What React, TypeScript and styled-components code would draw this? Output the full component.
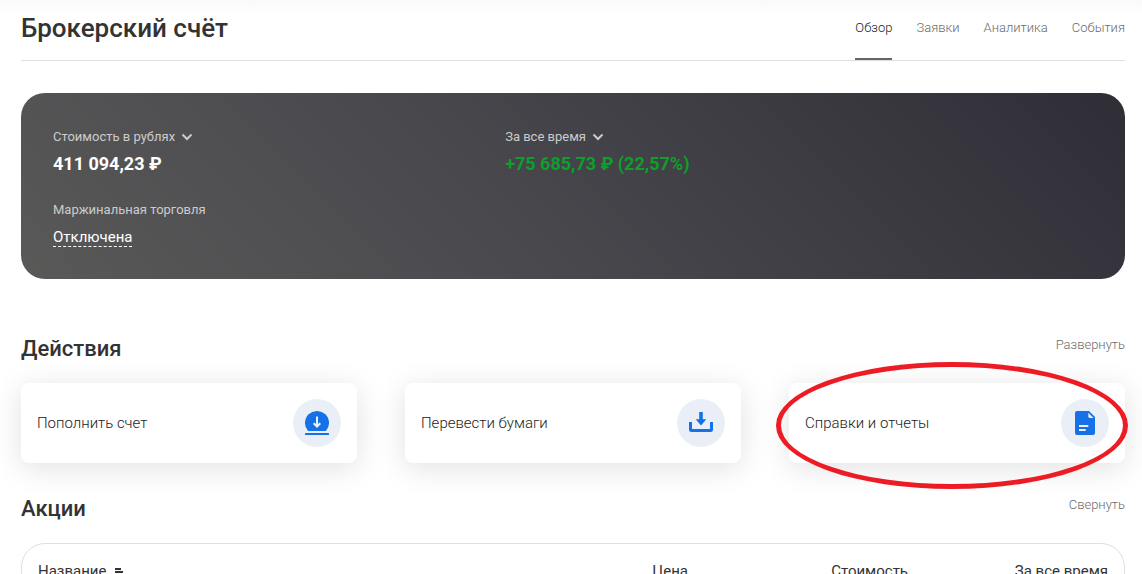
import React from "react";
import styled, { createGlobalStyle } from "styled-components";

const GlobalStyle = createGlobalStyle`
  *, *::before, *::after { box-sizing: border-box; }
  body {
    margin: 0;
    background: #fff;
    color: #333;
    font-family: Roboto, "Liberation Sans", sans-serif;
    font-size: 15px;
    line-height: 24px;
  }
  h1, h2, p { margin: 0; }
  button, select { font: inherit; color: inherit; }
`;

const Page = styled.main`
  padding: 0 17px 32px 21px;
  background: linear-gradient(#fafafa, #fff 16px);
`;

const Header = styled.header`
  display: flex;
  justify-content: space-between;
  height: 61px;
  border-bottom: 1px solid #dddfe0;
`;

const Title = styled.h1`
  padding-top: 12px;
  font-size: 26px;
  line-height: 32px;
  font-weight: 500;
`;

const Tabs = styled.nav`
  display: flex;
  gap: 24px;
`;

const Tab = styled.a<{ $active?: boolean }>`
  padding-top: 16px;
  border-bottom: 2px solid ${(p) => (p.$active ? "#666" : "transparent")};
  color: ${(p) => (p.$active ? "#222" : "#6b6b6b")};
  font-size: 13px;
  font-weight: 300;
  text-decoration: none;
`;

const Summary = styled.section`
  display: grid;
  grid-template-columns: 10fr 13fr;
  row-gap: 22px;
  margin-top: 32px;
  padding: 32px;
  border-radius: 24px;
  background: linear-gradient(45deg, #595958, #4a494e 40%, #2f2e37);
`;

const Caption = styled.div`
  display: flex;
  align-items: center;
  gap: 6px;
  height: 24px;
  color: #ccc;
  font-size: 13px;
`;

const PlainSelect = styled.select`
  appearance: none;
  field-sizing: content;
  padding: 0;
  border: 0;
  background: none;
`;

const Amount = styled.p<{ $gain?: boolean }>`
  height: 24px;
  margin-top: 3px;
  color: ${(p) => (p.$gain ? "#0d9f2b" : "#fff")};
  font-size: 18px;
  font-weight: 700;
`;

const MarginLink = styled.a`
  display: block;
  width: fit-content;
  margin-top: 6px;
  border-bottom: 1px dashed #fff;
  color: #fff;
  line-height: 18px;
  text-decoration: none;
`;

const SectionHead = styled.div<{ $first?: boolean }>`
  display: flex;
  justify-content: space-between;
  margin-top: ${(p) => (p.$first ? "54px" : "30px")};
`;

const Heading = styled.h2`
  font-size: 22px;
  line-height: 32px;
  font-weight: 500;
`;

const Toggle = styled.button`
  height: 24px;
  padding: 0;
  border: 0;
  background: none;
  color: #6b6b6b;
  font-size: 13px;
  font-weight: 300;
  cursor: pointer;
`;

const Actions = styled.div`
  display: grid;
  grid-template-columns: repeat(3, 1fr);
  gap: 48px;
  margin-top: 18px;
`;

const ActionCell = styled.div`
  position: relative;
`;

const Action = styled.button`
  display: flex;
  align-items: center;
  justify-content: space-between;
  width: 100%;
  height: 80px;
  padding: 16px;
  border: 0;
  border-radius: 8px;
  background: #fff;
  box-shadow: 0 5px 30px rgba(0, 0, 0, 0.12);
  color: #222;
  font-weight: 300;
  text-align: left;
  cursor: pointer;
`;

const IconDisc = styled.span`
  display: grid;
  place-items: center;
  width: 48px;
  height: 48px;
  border-radius: 50%;
  background: #eaeff7;
`;

const Marker = styled.div`
  position: absolute;
  inset: -21px -3px -26px -13px;
  border: 5px solid #ed1c24;
  border-radius: 50%;
  pointer-events: none;
`;

const TableFrame = styled.div`
  margin-top: 18px;
  padding: 16px;
  border: 1px solid #dddfe0;
  border-radius: 24px;
`;

const Table = styled.table`
  width: 100%;
  border-collapse: collapse;
  table-layout: fixed;
`;

const Th = styled.th<{ $width?: string }>`
  width: ${(p) => p.$width ?? "auto"};
  padding: 0;
  line-height: 22px;
  font-weight: 400;
  text-align: right;

  &:first-child { text-align: left; }
  svg { margin-left: 8px; }
`;

const Chevron = () => (
  <svg width="12" height="8" viewBox="0 0 12 8" fill="none" stroke="#ccc" strokeWidth="2" aria-hidden="true">
    <path d="M1.5 1.5 6 6l4.5-4.5" />
  </svg>
);

const DepositIcon = () => (
  <svg width="24" height="24" viewBox="0 0 24 24" aria-hidden="true">
    <path fill="#1771e6" d="M3.06 20A12 12 0 1 1 20.94 20Z" />
    <rect y="22" width="24" height="2" rx="0.5" fill="#1771e6" />
    <path d="M12 5.500V15.500M8.700 12.200 12 15.500l3.300-3.300" fill="none" stroke="#eaf1fb" strokeWidth="2" />
  </svg>
);

const TransferIcon = () => (
  <svg width="24" height="24" viewBox="0 0 24 24" aria-hidden="true">
    <path fill="#1771e6" d="M10.200 1h3.600v7.200h3.500L12 14.500 6.700 8.200h3.500Z" />
    <path d="M1.500 11v7.500q0 1 1 1h19q1 0 1-1V11" fill="none" stroke="#1771e6" strokeWidth="3" />
  </svg>
);

const ReportIcon = () => (
  <svg width="24" height="24" viewBox="0 0 24 24" aria-hidden="true">
    <path fill="#1771e6" d="M4 0h12l6 6v16q0 2-2 2H4q-2 0-2-2V2q0-2 2-2Z" />
    <path fill="#eaeff7" d="M15.300 1.700 20.500 7H17q-1.700 0-1.700-1.700Z" />
    <path d="M6 15h9.300M6 19h6.700" stroke="#eaeff7" strokeWidth="2" />
  </svg>
);

const SortIcon = () => (
  <svg width="10" height="10" viewBox="0 0 10 10" stroke="#333" strokeWidth="2" aria-hidden="true">
    <path d="M1 3h6M1 6h8" />
  </svg>
);

const tabs = ["Обзор", "Заявки", "Аналитика", "События"];

const actions = [
  { label: "Пополнить счет", icon: <DepositIcon /> },
  { label: "Перевести бумаги", icon: <TransferIcon /> },
  { label: "Справки и отчеты", icon: <ReportIcon />, marked: true },
];

export default function App() {
  return (
    <>
      <GlobalStyle />
      <Page>
        <Header>
          <Title>Брокерский счёт</Title>
          <Tabs>
            {tabs.map((name, i) => (
              <Tab key={name} href="#" $active={i === 0}>{name}</Tab>
            ))}
          </Tabs>
        </Header>

        <Summary>
          <div>
            <Caption>
              <PlainSelect aria-label="Валюта"><option>Стоимость в рублях</option></PlainSelect>
              <Chevron />
            </Caption>
            <Amount>411 094,23 ₽</Amount>
          </div>
          <div>
            <Caption>
              <PlainSelect aria-label="Период"><option>За все время</option></PlainSelect>
              <Chevron />
            </Caption>
            <Amount $gain>+75 685,73 ₽ (22,57%)</Amount>
          </div>
          <div>
            <Caption>Маржинальная торговля</Caption>
            <MarginLink href="#">Отключена</MarginLink>
          </div>
        </Summary>

        <SectionHead $first>
          <Heading>Действия</Heading>
          <Toggle type="button">Развернуть</Toggle>
        </SectionHead>
        <Actions>
          {actions.map((a) => (
            <ActionCell key={a.label}>
              <Action type="button">
                {a.label}
                <IconDisc>{a.icon}</IconDisc>
              </Action>
              {a.marked && <Marker />}
            </ActionCell>
          ))}
        </Actions>

        <SectionHead>
          <Heading>Акции</Heading>
          <Toggle type="button">Свернуть</Toggle>
        </SectionHead>
        <TableFrame>
          <Table>
            <thead>
              <tr>
                <Th scope="col">Название<SortIcon /></Th>
                <Th scope="col" $width="220px">Цена</Th>
                <Th scope="col" $width="220px">Стоимость</Th>
                <Th scope="col" $width="200px">За все время</Th>
              </tr>
            </thead>
          </Table>
        </TableFrame>
      </Page>
    </>
  );
}
